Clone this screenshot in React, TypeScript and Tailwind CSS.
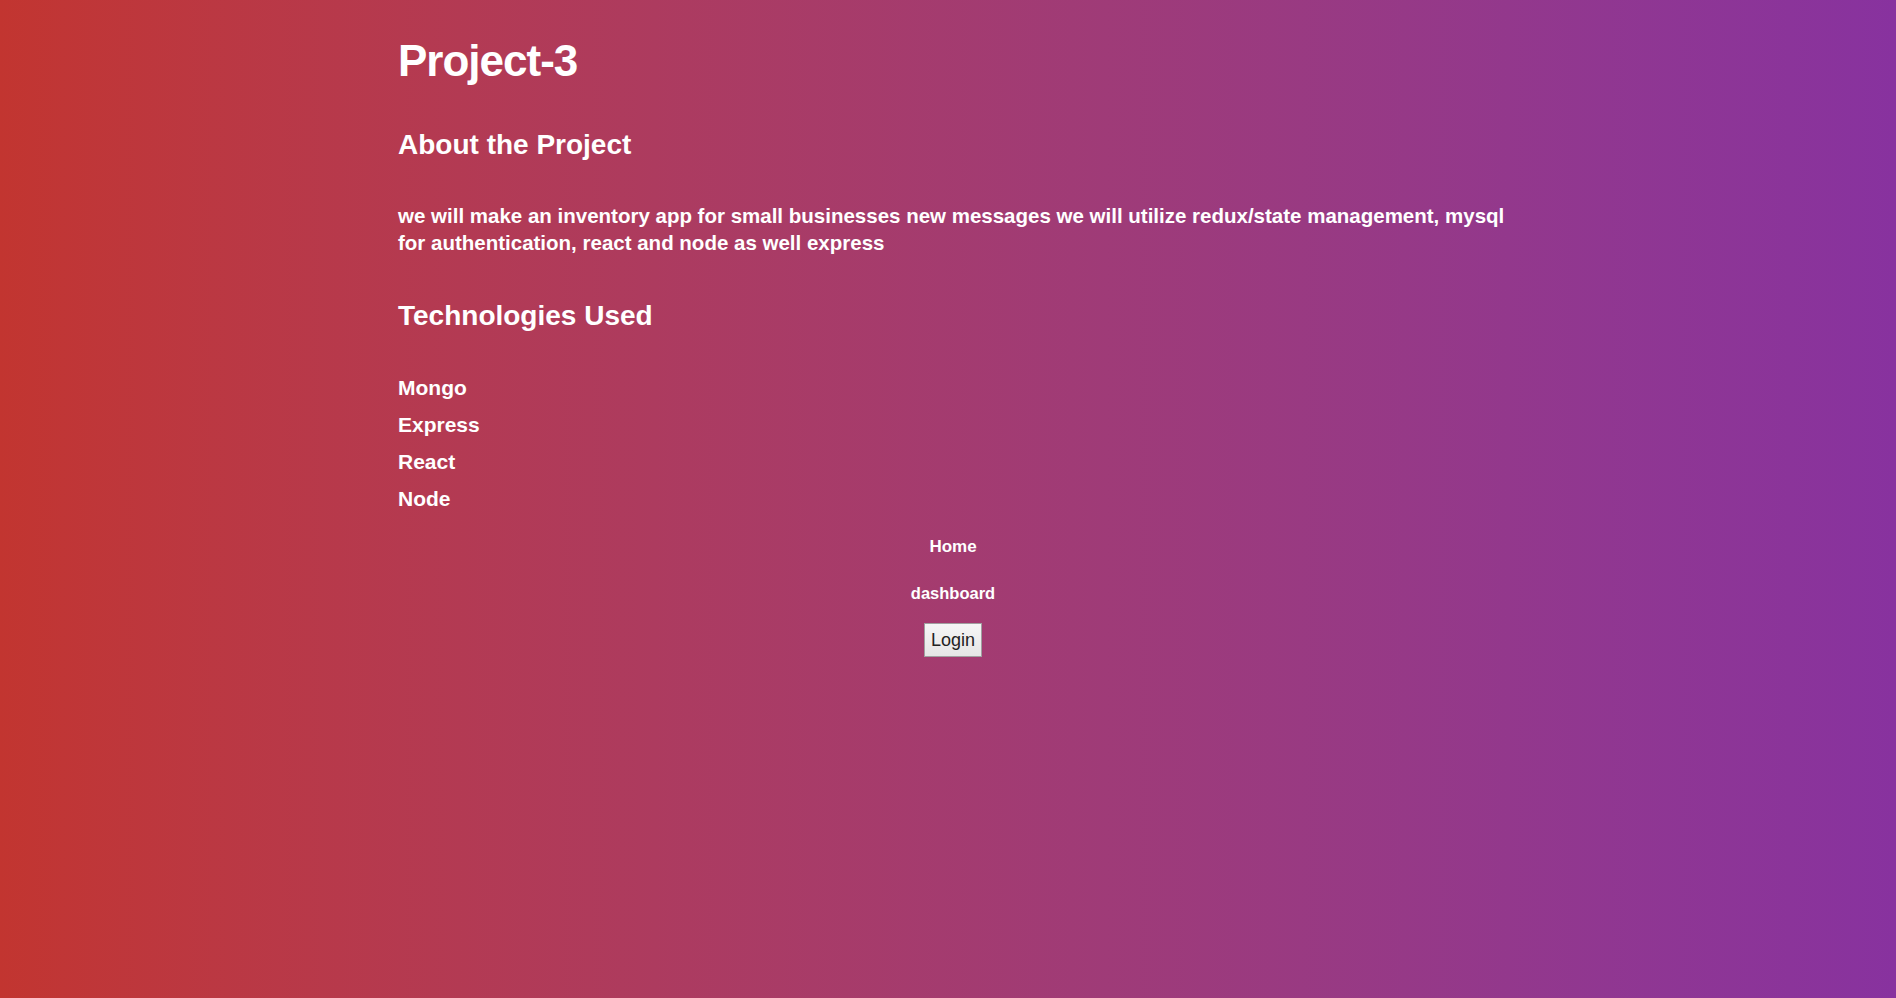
const techs = ["Mongo", "Express", "React", "Node"];

export default function App() {
  return (
    <div
      className="min-h-screen bg-gradient-to-r from-[#c23530] to-[#88329f] text-white"
      style={{ fontFamily: '"Liberation Sans", Arial, sans-serif' }}
    >
      <div className="mx-auto w-[1120px] pl-[10px] pt-[31px]">
        <h1 className="text-[44px] leading-[60px] font-bold tracking-[-1px]">Project-3</h1>

        <h2 className="mt-[34px] text-[28px] leading-[40px] font-bold">About the Project</h2>
        <p className="mt-[37px] whitespace-nowrap text-[20.5px] leading-[27px] font-bold">
          we will make an inventory app for small businesses new messages we will utilize redux/state management, mysql
          <br />
          for authentication, react and node as well express
        </p>

        <h2 className="mt-[40px] text-[28px] leading-[40px] font-bold">Technologies Used</h2>
        <ul className="mt-[33px]">
          {techs.map((t) => (
            <li key={t} className="text-[21px] leading-[37px] font-bold">
              {t}
            </li>
          ))}
        </ul>

        <nav className="mt-[6px] flex flex-col items-center">
          <a href="#" className="text-[17px] leading-[47px] font-bold text-white">
            Home
          </a>
          <a href="#" className="text-[16.5px] leading-[47px] font-bold text-white">
            dashboard
          </a>
          <button className="mt-[6px] h-[34px] w-[58px] border border-[#a0a0a0] bg-gradient-to-b from-[#f6f6f6] to-[#e6e6e6] text-[18px] leading-none text-[#222]">
            Login
          </button>
        </nav>
      </div>
    </div>
  );
}
